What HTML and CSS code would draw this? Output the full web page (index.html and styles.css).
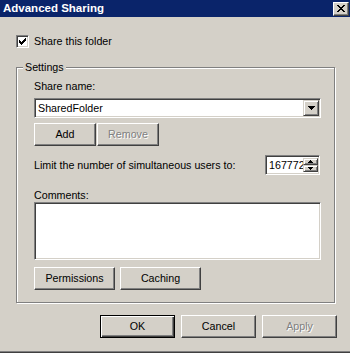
FILE: index.html
```html
<!DOCTYPE html>
<html>
<head>
<meta charset="utf-8">
<link rel="stylesheet" href="styles.css">
</head>
<body>
<div class="window">
  <div class="titlebar">
    <span class="title">Advanced Sharing</span>
    <span class="close">
      <svg width="8" height="7" viewBox="0 0 8 7"><path d="M0 0h2v1h-2z M6 0h2v1h-2z M1 1h2v1h-2z M5 1h2v1h-2z M2 2h4v1h-4z M3 3h2v1h-2z M2 4h4v1h-4z M1 5h2v1h-2z M5 5h2v1h-2z M0 6h2v1h-2z M6 6h2v1h-2z" fill="#000"/></svg>
    </span>
  </div>
  <div class="content">
    <div class="check-row">
      <span class="checkbox">
        <svg width="7" height="7" viewBox="0 0 7 7"><path d="M6 0h1v1h-1z M5 1h2v1h-2z M0 2h1v1h-1z M4 2h3v1h-3z M0 3h2v1h-2z M3 3h3v1h-3z M0 4h5v1h-5z M1 5h3v1h-3z M2 6h1v1h-1z" fill="#000"/></svg>
      </span>
      <span class="check-label">Share this folder</span>
    </div>
    <fieldset class="group">
      <legend class="group-title">Settings</legend>
      <div class="label label-share">Share name:</div>
      <div class="combo">
        <span class="combo-text">SharedFolder</span>
        <span class="combo-btn">
          <svg width="7" height="4" viewBox="0 0 7 4"><path d="M0 0h7v1h-7z M1 1h5v1h-5z M2 2h3v1h-3z M3 3h1v1h-1z" fill="#000"/></svg>
        </span>
      </div>
      <div class="btn-row btn-row-tight">
        <div class="btn btn-small">Add</div>
        <div class="btn btn-small disabled">Remove</div>
      </div>
      <div class="limit-row">
        <span class="limit-label">Limit the number of simultaneous users to:</span>
        <div class="spin">
          <span class="spin-text">16777216</span>
          <span class="spin-btns">
            <span class="spin-btn"><svg width="5" height="3" viewBox="0 0 5 3"><path d="M2 0h1v1h-1z M1 1h3v1h-3z M0 2h5v1h-5z" fill="#000"/></svg></span>
            <span class="spin-btn"><svg width="5" height="3" viewBox="0 0 5 3"><path d="M0 0h5v1h-5z M1 1h3v1h-3z M2 2h1v1h-1z" fill="#000"/></svg></span>
          </span>
        </div>
      </div>
      <div class="label label-comments">Comments:</div>
      <div class="textarea"></div>
      <div class="btn-row btn-row-wide">
        <div class="btn btn-mid">Permissions</div>
        <div class="btn btn-mid">Caching</div>
      </div>
    </fieldset>
    <div class="dialog-buttons">
      <div class="btn btn-dialog default">OK</div>
      <div class="btn btn-dialog">Cancel</div>
      <div class="btn btn-dialog disabled">Apply</div>
    </div>
  </div>
</div>
</body>
</html>
```
FILE: styles.css
```css
* { box-sizing: border-box; }
html, body { margin: 0; padding: 0; }
body {
  width: 350px;
  height: 353px;
  overflow: hidden;
  background: #d4d0c8;
  font-family: "Liberation Sans", Arial, sans-serif;
  font-size: 10.7px;
  line-height: 13px;
  color: #000;
}
svg { display: block; }

.window {
  height: 353px;
  display: flex;
  flex-direction: column;
  box-shadow: inset 0 -1px #404040, inset 0 -2px #808080;
}

.titlebar {
  height: 17px;
  flex: none;
  background: #0a246a;
  display: flex;
  align-items: center;
  justify-content: space-between;
  padding: 0 1px 0 3px;
}
.title {
  color: #fff;
  font-weight: bold;
  font-size: 11.5px;
  line-height: 13px;
}
.close {
  width: 16px;
  height: 14px;
  display: flex;
  align-items: center;
  justify-content: center;
  background: #d4d0c8;
  border: 1px solid;
  border-color: #fff #404040 #404040 #fff;
  box-shadow: inset -1px -1px #808080;
  padding-right: 1px;
}

.content {
  flex: 1;
  display: flex;
  flex-direction: column;
}

.check-row {
  display: flex;
  align-items: center;
  gap: 5px;
  height: 13px;
  margin: 18px 0 0 16px;
}
.checkbox {
  width: 13px;
  height: 13px;
  background: #fff;
  border: 1px solid;
  border-color: #808080 #fff #fff #808080;
  box-shadow: inset 1px 1px #404040, inset -1px -1px #d4d0c8;
  padding: 2px 0 0 2px;
}

.group {
  margin: 13px 0 0 16px;
  width: 319px;
  padding: 6px 13px 12px 17px;
  border: 1px solid #808080;
  box-shadow: inset 1px 1px #fff, 1px 1px #fff;
  min-width: 0;
}
.group-title {
  padding: 0 2px;
  margin-left: -11px;
  background: #d4d0c8;
  line-height: 13px;
}

.label { height: 13px; }
.label-comments { margin-top: 14px; }

.combo, .spin, .textarea {
  background: #fff;
  border: 1px solid;
  border-color: #808080 #fff #fff #808080;
  box-shadow: inset 1px 1px #404040, inset -1px -1px #d4d0c8;
}
.combo {
  margin-top: 5px;
  height: 20px;
  width: 287px;
  display: flex;
  align-items: stretch;
  padding: 1px;
}
.combo-text {
  flex: 1;
  padding-left: 2px;
  display: flex;
  align-items: center;
}
.combo-btn, .spin-btn {
  background: #d4d0c8;
  border: 1px solid;
  border-color: #d4d0c8 #404040 #404040 #d4d0c8;
  box-shadow: inset 1px 1px #fff, inset -1px -1px #808080;
  display: flex;
  align-items: center;
  justify-content: center;
}
.combo-btn { width: 16px; }

.btn {
  display: flex;
  align-items: center;
  justify-content: center;
  height: 23px;
  background: #d4d0c8;
  border: 1px solid;
  border-color: #fff #404040 #404040 #fff;
  box-shadow: inset -1px -1px #808080;
}
.btn.default {
  border-color: #000;
  box-shadow: inset 1px 1px #fff, inset -1px -1px #404040, inset -2px -2px #808080;
}
.btn.disabled {
  color: #808080;
  text-shadow: 1px 1px 0 #fff;
}
.btn-row { display: flex; }
.btn-row-tight { margin-top: 5px; gap: 1px; }
.btn-small { width: 62px; }
.btn-row-wide { margin-top: 7px; gap: 5px; }
.btn-mid { width: 81px; }

.limit-row {
  margin-top: 9px;
  display: flex;
  align-items: center;
  justify-content: space-between;
}
.spin {
  width: 55px;
  height: 20px;
  margin-right: 1px;
  padding: 2px 1px 2px 2px;
  display: flex;
}
.spin-text {
  flex: 1;
  overflow: hidden;
  white-space: nowrap;
  padding-left: 1px;
  display: flex;
  align-items: center;
  width: 35px;
}
.spin-btns {
  width: 15px;
  display: flex;
  flex-direction: column;
}
.spin-btn { height: 8px; }

.textarea {
  width: 287px;
  height: 58px;
}

.dialog-buttons {
  display: flex;
  gap: 6px;
  margin: 12px 0 0 100px;
}
.btn-dialog { width: 75px; }
```
